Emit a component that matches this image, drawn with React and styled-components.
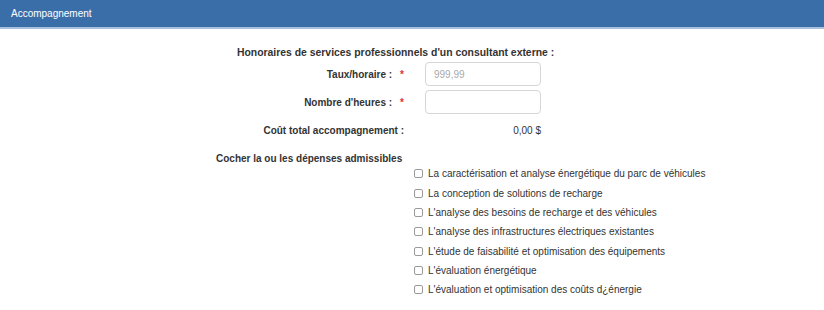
import React from "react";
import styled, { createGlobalStyle } from "styled-components";

const Global = createGlobalStyle`
  body { margin: 0; background: #fff; font-family: "Liberation Sans", Arial, sans-serif; }
`;

const Panel = styled.div`
  width: 824px;
  height: 310px;
  overflow: hidden;
  background: #fff;
`;

const Header = styled.div`
  height: 29px;
  background: #3a6ea9;
  border-bottom: 2px solid #a9c0dd;
  color: #fff;
  font-size: 10px;
  display: flex;
  align-items: center;
  padding-left: 11px;
  box-sizing: border-box;
`;

const Body = styled.div`
  padding-top: 16px;
  display: flex;
  flex-direction: column;
`;

const Heading = styled.div`
  font-size: 10.4px;
  font-weight: bold;
  color: #333;
  margin-left: 237px;
  height: 15px;
  display: flex;
  align-items: center;
`;

const Row = styled.div`
  display: grid;
  grid-template-columns: 404px 116px;
  column-gap: 21px;
  align-items: center;
  height: 28px;
`;

const Label = styled.div`
  font-size: 10px;
  font-weight: bold;
  color: #333;
  text-align: right;
`;

const Star = styled.span`
  color: #e0303a;
  margin-left: 8px;
`;

const Input = styled.input`
  box-sizing: border-box;
  width: 116px;
  height: 24px;
  border: 1px solid #d6d6d6;
  border-radius: 4px;
  padding: 0 8px;
  font-family: "Liberation Sans", Arial, sans-serif;
  font-size: 10px;
  color: #333;
  outline: none;
  &::placeholder { color: #aaa; }
`;

const Value = styled.div`
  font-size: 10px;
  color: #333;
  text-align: right;
`;

const Section = styled.div`
  font-size: 10px;
  font-weight: bold;
  color: #333;
  margin-left: 216px;
  margin-top: 8px;
  height: 12px;
  display: flex;
  align-items: center;
`;

const List = styled.div`
  margin-left: 414px;
  margin-top: 0;
  display: flex;
  flex-direction: column;
`;

const Item = styled.label`
  display: flex;
  align-items: center;
  height: 19.35px;
  font-size: 10px;
  color: #333;
`;

const Box = styled.span`
  width: 7px;
  height: 7px;
  border: 1px solid #9a9a9a;
  border-radius: 2px;
  margin-right: 5px;
  background: #fff;
`;

const items = [
  "La caractérisation et analyse énergétique du parc de véhicules",
  "La conception de solutions de recharge",
  "L'analyse des besoins de recharge et des véhicules",
  "L'analyse des infrastructures électriques existantes",
  "L'étude de faisabilité et optimisation des équipements",
  "L'évaluation énergétique",
  "L'évaluation et optimisation des coûts d¿énergie",
];

export default function App() {
  return (
    <Panel>
      <Global />
      <Header>Accompagnement</Header>
      <Body>
        <Heading>Honoraires de services professionnels d'un consultant externe :</Heading>
        <Row>
          <Label>Taux/horaire :<Star>*</Star></Label>
          <Input placeholder="999,99" />
        </Row>
        <Row>
          <Label>Nombre d'heures :<Star>*</Star></Label>
          <Input />
        </Row>
        <Row>
          <Label>Coût total accompagnement :</Label>
          <Value>0,00 $</Value>
        </Row>
        <Section>Cocher la ou les dépenses admissibles</Section>
        <List>
          {items.map((t) => (
            <Item key={t}>
              <Box />
              {t}
            </Item>
          ))}
        </List>
      </Body>
    </Panel>
  );
}
